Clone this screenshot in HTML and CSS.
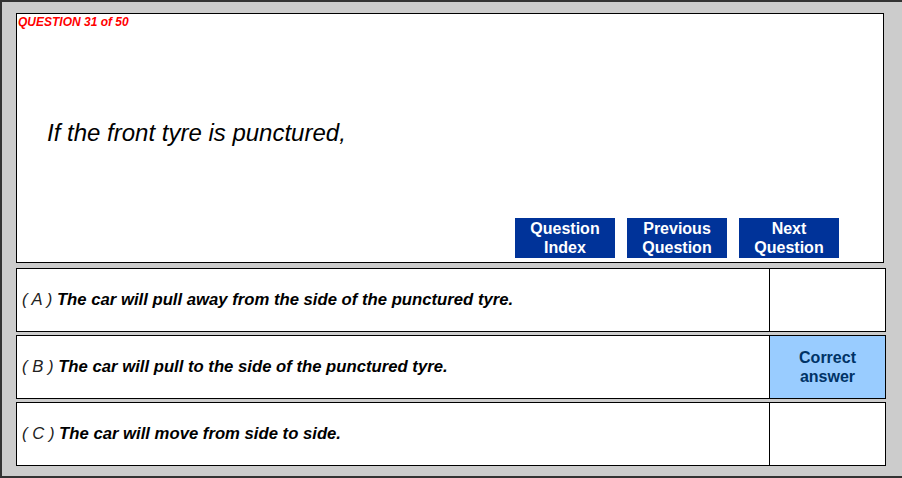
FILE: index.html
```html
<!DOCTYPE html>
<html>
<head>
  <title>Question 31 of 50</title>
  <meta charset="UTF-8">
  <link rel="stylesheet" href="styles.css">
</head>
<body>
  <div id="quiz-frame">
    <div class="question-panel">
      <div class="question-count">QUESTION 31 of 50</div>
      <div class="question-text">If the front tyre is punctured,</div>
      <div class="nav-buttons">
        <button class="nav-btn">Question<br>Index</button>
        <button class="nav-btn">Previous<br>Question</button>
        <button class="nav-btn">Next<br>Question</button>
      </div>
    </div>

    <div class="answer-row">
      <div class="answer-text"><span class="answer-key">( A )</span> The car will pull away from the side of the punctured tyre.</div>
      <div class="answer-mark"></div>
    </div>
    <div class="answer-row">
      <div class="answer-text"><span class="answer-key">( B )</span> The car will pull to the side of the punctured tyre.</div>
      <div class="answer-mark correct">Correct<br>answer</div>
    </div>
    <div class="answer-row">
      <div class="answer-text"><span class="answer-key">( C )</span> The car will move from side to side.</div>
      <div class="answer-mark"></div>
    </div>
  </div>
</body>
</html>
```

FILE: styles.css
```css
:root {
  --frame-bg: #cccccc;
  --frame-border: #333333;
  --button-bg: #003399;
  --correct-bg: #99ccff;
  --correct-text: #003366;
  --count-red: #ff0000;
}

* {
  box-sizing: border-box;
}

body {
  margin: 0;
  padding: 0;
  font-family: "Liberation Sans", Arial, sans-serif;
  color: #000000;
  background: #ffffff;
}

#quiz-frame {
  width: 902px;
  height: 478px;
  display: flex;
  flex-direction: column;
  background: var(--frame-bg);
  border: 2px solid var(--frame-border);
  border-right: none;
  padding: 11px 16px 10px 14px;
}

.question-panel {
  height: 250px;
  margin-right: 2px;
  display: flex;
  flex-direction: column;
  background: #ffffff;
  border: 1px solid #000000;
}

.question-count {
  padding: 1px 0 0 1px;
  font-size: 12px;
  line-height: 14px;
  font-weight: 700;
  font-style: italic;
  color: var(--count-red);
}

.question-text {
  margin-top: 90px;
  padding-left: 30px;
  font-size: 24px;
  line-height: 28px;
  font-style: italic;
}

.nav-buttons {
  display: flex;
  justify-content: flex-end;
  gap: 12px;
  margin-top: auto;
  margin-right: 44px;
  margin-bottom: 4px;
}

.nav-btn {
  width: 100px;
  height: 40px;
  padding: 0;
  border: none;
  background: var(--button-bg);
  color: #ffffff;
  font-family: inherit;
  font-size: 16px;
  line-height: 19px;
  font-weight: 700;
  text-align: center;
}

.answer-row {
  height: 64px;
  display: flex;
  background: #ffffff;
  border: 1px solid #000000;
  margin-top: 3px;
}

.question-panel + .answer-row {
  margin-top: 5px;
}

.answer-text {
  flex: 1;
  display: flex;
  align-items: center;
  padding-left: 5px;
  font-size: 16.7px;
  font-weight: 700;
  font-style: italic;
  white-space: pre;
}

.answer-key {
  font-weight: 400;
  color: #222222;
}

.answer-mark {
  width: 116px;
  border-left: 1px solid #000000;
}

.answer-mark.correct {
  display: flex;
  align-items: center;
  justify-content: center;
  text-align: center;
  background: var(--correct-bg);
  color: var(--correct-text);
  font-size: 16px;
  line-height: 19px;
  font-weight: 700;
}
```
